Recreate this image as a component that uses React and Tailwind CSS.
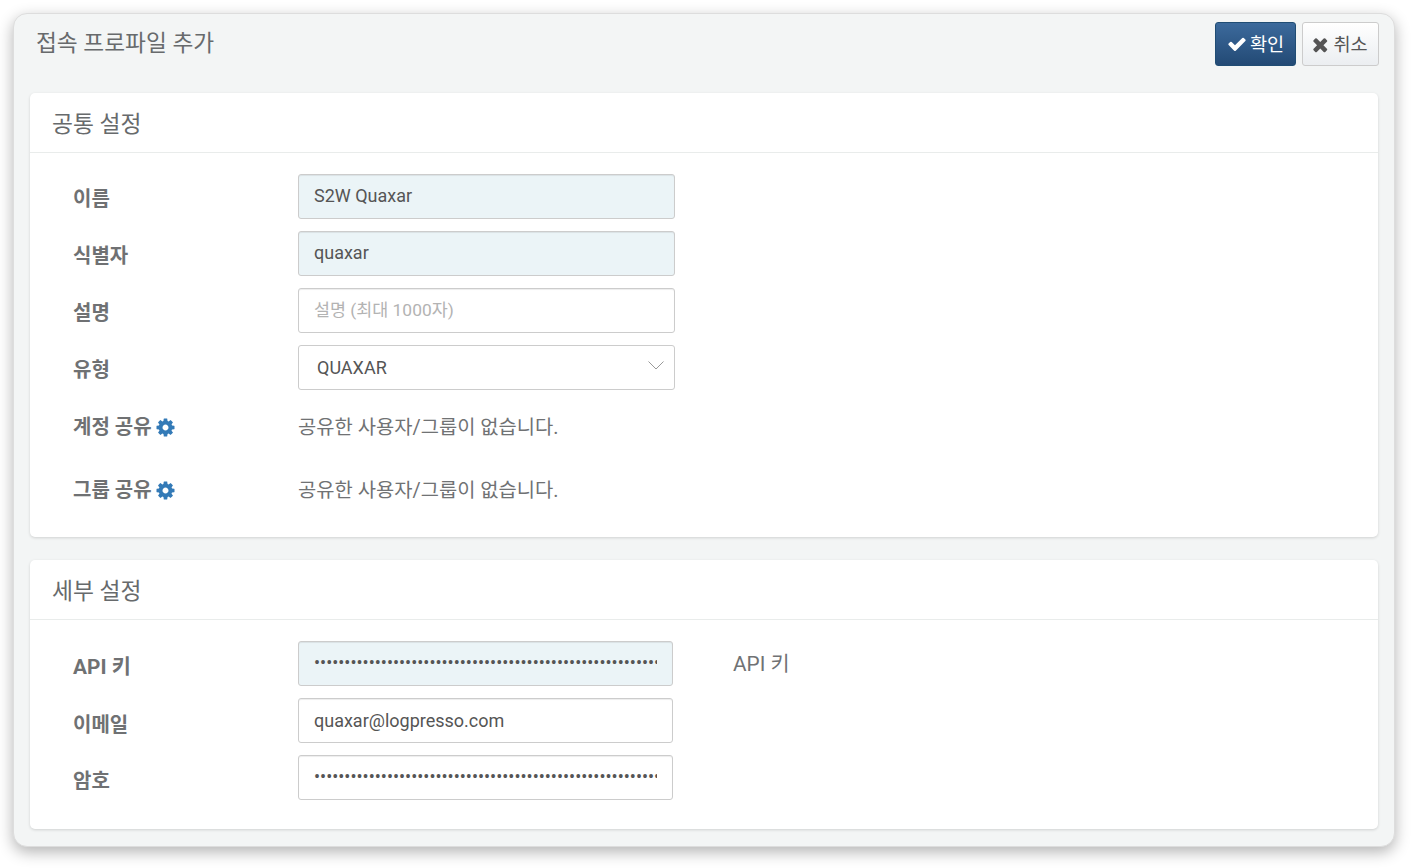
import React from "react";

const FONT = "font-['Roboto','Noto_Sans_CJK_KR',sans-serif]";

function CogIcon() {
  return (
    <svg viewBox="0 0 1792 1792" className="w-[21px] h-[21px] fill-[#337ab7]">
      <path d="M1152 896q0-106-75-181t-181-75-181 75-75 181 75 181 181 75 181-75 75-181zm512-109v222q0 12-8 23t-20 13l-185 28q-19 54-39 91 35 50 107 138 10 12 10 25t-9 23q-27 37-99 108t-94 71q-12 0-26-9l-138-108q-44 23-91 38-16 136-29 186-7 28-36 28h-222q-14 0-24.500-8.500t-11.500-21.500l-28-184q-49-16-90-37l-141 107q-10 9-25 9-14 0-25-11-126-114-165-168-7-10-7-23 0-12 8-23 15-21 51-66.500t54-70.500q-27-50-41-99l-183-27q-13-2-21-12.500t-8-23.500v-222q0-12 8-23t19-13l186-28q14-46 39-92-40-57-107-138-10-12-10-24 0-10 9-23 26-36 98.500-107.500t94.500-71.500q13 0 26 10l138 107q44-23 91-38 16-136 29-186 7-28 36-28h222q14 0 24.500 8.500t11.500 21.500l28 184q49 16 90 37l142-107q9-9 24-9 13 0 25 10 129 119 165 170 7 8 7 22 0 12-8 23-15 21-51 66.500t-54 70.500q26 50 41 98l183 28q13 2 21 12.500t8 23.500z" />
    </svg>
  );
}

function Label({ children, className = "pt-[5px]" }) {
  return (
    <div className={`w-[225px] shrink-0 flex items-center gap-[3px] text-[20px] font-bold text-[#6f7173] ${className}`}>
      {children}
    </div>
  );
}

function TextInput({ value, placeholder, type = "text", filled, width = "w-[377px]", className = "pb-[2px]" }) {
  return (
    <input
      readOnly
      type={type}
      value={value}
      placeholder={placeholder}
      className={`${width} h-[45px] px-[15px] border border-[#cccccc] rounded-[3px] text-[18px] text-[#555555] placeholder:text-[#b3b3b3] placeholder:text-[17.4px] outline-none shadow-[inset_0_1px_1px_rgba(0,0,0,0.075)] ${className} ${
        filled ? "bg-[#ebf4f7]" : "bg-white"
      }`}
    />
  );
}

function Row({ label, labelClass, children }) {
  return (
    <div className="flex items-center">
      <Label className={labelClass}>{label}</Label>
      {children}
    </div>
  );
}

function ShareRow({ label, className }) {
  return (
    <div className={`flex items-center ${className}`}>
      <Label className="pt-0">
        {label}
        <CogIcon />
      </Label>
      <span className="mt-[2px] text-[19.85px] text-[#707274]">공유한 사용자/그룹이 없습니다.</span>
    </div>
  );
}

function Card({ title, className, children }) {
  return (
    <div className={`bg-white rounded-[5px] shadow-[0_1px_3px_rgba(0,0,0,0.15)] ${className}`}>
      <div className="h-[60px] flex items-center px-[22px] pt-[6px] border-b border-[#e9eceb] text-[22.8px] text-[#676a6c]">
        {title}
      </div>
      {children}
    </div>
  );
}

const dots = "•".repeat(90);

export default function App() {
  return (
    <div className={`w-[1416px] h-[868px] bg-white pl-[13px] pr-[21px] py-[13px] ${FONT}`}>
      <div className="h-[834px] bg-[#f3f5f5] border border-[#dddddd] rounded-[14px] px-[16px] shadow-[0_5px_15px_rgba(0,0,0,0.3)]">
        <div className="h-[79px] flex justify-between pt-[8px]">
          <div className="pl-[6px] pt-[4px] text-[22.7px] leading-[36px] text-[#676a6c]">접속 프로파일 추가</div>
          <div className="flex gap-[6px] h-[44px] -mr-[1px]">
            <button className="w-[81px] flex items-center justify-center gap-[3px] rounded-[3px] border border-[#204d74] bg-gradient-to-b from-[#3c6a9c] to-[#234a75] text-white text-[18.6px]">
              <svg viewBox="0 0 1792 1792" className="w-[20px] h-[20px] fill-white">
                <path d="M1671 566q0 40-28 68l-724 724-136 136q-28 28-68 28t-68-28l-136-136-362-362q-28-28-28-68t28-68l136-136q28-28 68-28t68 28l294 295 656-657q28-28 68-28t68 28l136 136q28 28 28 68z" />
              </svg>
              <span className="mt-[3px]">확인</span>
            </button>
            <button className="w-[77px] flex items-center justify-center gap-0 pr-[1px] rounded-[3px] border border-[#cccccc] bg-gradient-to-b from-white to-[#ebeef1] text-[#555555] text-[18.6px]">
              <svg viewBox="0 0 1792 1792" className="w-[21px] h-[21px] fill-[#555555]">
                <path d="M1298 1322q0 40-28 68l-136 136q-28 28-68 28t-68-28l-294-294-294 294q-28 28-68 28t-68-28l-136-136q-28-28-28-68t28-68l294-294-294-294q-28-28-28-68t28-68l136-136q28-28 68-28t68 28l294 294 294-294q28-28 68-28t68 28l136 136q28 28 28 68t-28 68l-294 294 294 294q28 28 28 68z" />
              </svg>
              <span className="mt-[3px]">취소</span>
            </button>
          </div>
        </div>

        <Card title="공통 설정" className="h-[444px]">
          <div className="pl-[43px] pt-[21px] flex flex-col">
            <div className="flex flex-col gap-[12px]">
              <Row label="이름"><TextInput value="S2W Quaxar" filled /></Row>
              <Row label="식별자"><TextInput value="quaxar" filled /></Row>
              <Row label="설명"><TextInput value="" placeholder="설명 (최대 1000자)" /></Row>
              <Row label="유형">
                <div className="relative w-[377px] h-[45px] pl-[18px] flex items-center border border-[#cccccc] rounded-[3px] text-[18px] text-[#555555]">
                  QUAXAR
                  <svg viewBox="0 0 16 9" className="absolute right-[10px] top-[15px] w-[16px] h-[9px] fill-none stroke-[#999999]">
                    <path d="M0.5 0.5 L8 8 L15.500 0.500" />
                  </svg>
                </div>
              </Row>
            </div>
            <ShareRow label="계정 공유" className="h-[26px] mt-[24px]" />
            <ShareRow label="그룹 공유" className="h-[26px] mt-[37px]" />
          </div>
        </Card>

        <Card title="세부 설정" className="h-[269px] mt-[23px]">
          <div className="pl-[43px] pt-[21px] flex flex-col gap-[12px]">
            <Row label={<span className="text-[20.8px]">API 키</span>} labelClass="pt-[9px]">
              <TextInput type="password" value={dots} filled width="w-[375px]" />
              <span className="ml-[60px] text-[20.8px] text-[#707274] mt-[3px]">API 키</span>
            </Row>
            <Row label="이메일" labelClass="pt-[9px]">
              <TextInput value="quaxar@logpresso.com" width="w-[375px]" className="pb-0" />
            </Row>
            <Row label="암호" labelClass="pt-[7px]"><TextInput type="password" value={dots} width="w-[375px]" /></Row>
          </div>
        </Card>
      </div>
    </div>
  );
}
